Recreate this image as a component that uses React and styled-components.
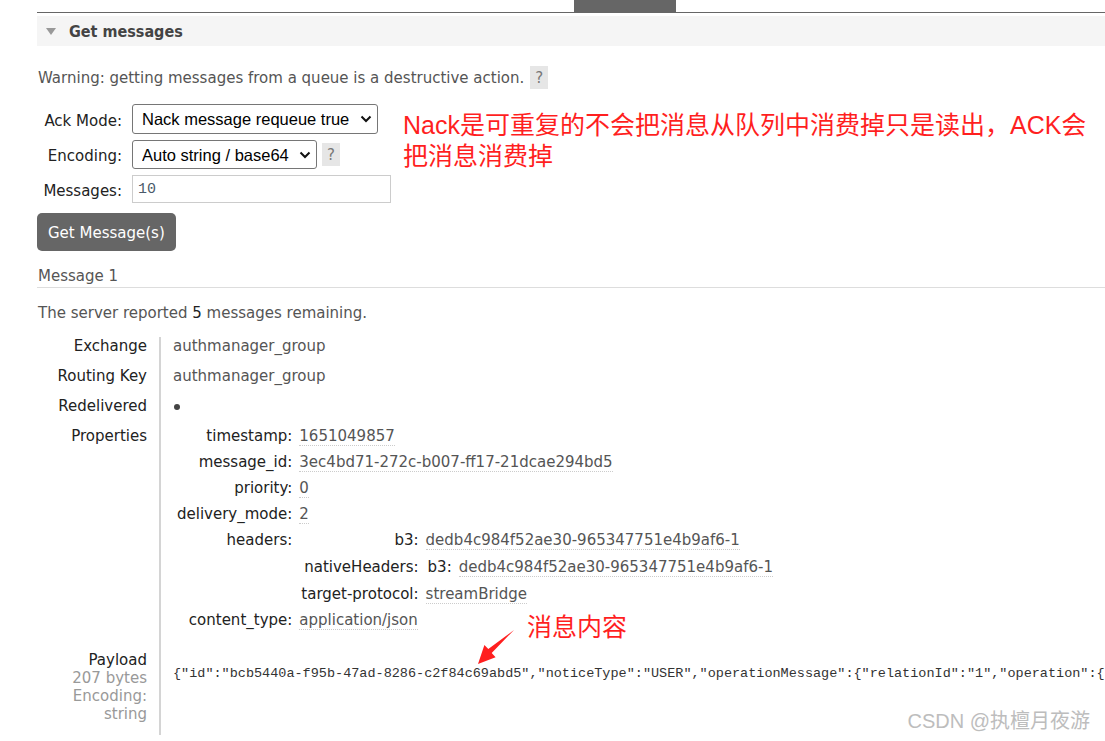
import React from 'react'
import styled, { createGlobalStyle } from 'styled-components'

const GlobalStyle = createGlobalStyle`
  html, body {
    margin: 0;
    padding: 0;
    background: #fff;
    overflow: hidden;
  }
  body {
    font-family: "DejaVu Sans", Verdana, sans-serif;
    font-size: 15px;
    color: #555;
  }
`

const PAYLOAD = '{"id":"bcb5440a-f95b-47ad-8286-c2f84c69abd5","noticeType":"USER","operationMessage":{"relationId":"1","operation":{"operationType":"ADD","content":"authmanager"}}}'

export default function App() {
    return (
        <Page>
            <GlobalStyle />
            <TabBar>
                <Tab />
                <Tab active />
            </TabBar>

            <SectionHeader>
                <Toggle />
                Get messages
            </SectionHeader>

            <Warning>
                Warning: getting messages from a queue is a destructive action.
                <Help>?</Help>
            </Warning>

            <FormArea>
                <Form>
                    <FieldLabel>Ack Mode:</FieldLabel>
                    <Control>
                        <Dropdown width={246} height={30} value="Nack message requeue true" />
                    </Control>

                    <FieldLabel>Encoding:</FieldLabel>
                    <Control>
                        <Dropdown width={185} height={29} value="Auto string / base64" />
                        <Help>?</Help>
                    </Control>

                    <FieldLabel>Messages:</FieldLabel>
                    <Control>
                        <CountInput defaultValue="10" />
                    </Control>
                </Form>
                <Note>
                    Nack是可重复的不会把消息从队列中消费掉只是读出，ACK会<br />
                    把消息消费掉
                </Note>
            </FormArea>

            <Button>Get Message(s)</Button>

            <MessageTitle>Message 1</MessageTitle>
            <Remaining>
                The server reported <Strong>5</Strong> messages remaining.
            </Remaining>

            <Facts>
                <FactLabel>Exchange</FactLabel>
                <FactValue>authmanager_group</FactValue>

                <FactLabel>Routing Key</FactLabel>
                <FactValue>authmanager_group</FactValue>

                <FactLabel>Redelivered</FactLabel>
                <FactValue><Bullet /></FactValue>

                <FactLabel>Properties</FactLabel>
                <FactValue bottom={22}>
                    <Props indent={4} gap={8}>
                        <PropKey>timestamp:</PropKey>
                        <PropValue><Dotted>1651049857</Dotted></PropValue>
                        <PropKey>message_id:</PropKey>
                        <PropValue><Dotted>3ec4bd71-272c-b007-ff17-21dcae294bd5</Dotted></PropValue>
                        <PropKey>priority:</PropKey>
                        <PropValue><Dotted>0</Dotted></PropValue>
                        <PropKey>delivery_mode:</PropKey>
                        <PropValue><Dotted>2</Dotted></PropValue>
                        <PropKey>headers:</PropKey>
                        <PropValue>
                            <Props indent={2} gap={9}>
                                <PropKey>b3:</PropKey>
                                <PropValue><Dotted>dedb4c984f52ae30-965347751e4b9af6-1</Dotted></PropValue>
                                <PropKey>nativeHeaders:</PropKey>
                                <PropValue>
                                    <Props indent={2} gap={8}>
                                        <PropKey>b3:</PropKey>
                                        <PropValue><Dotted>dedb4c984f52ae30-965347751e4b9af6-1</Dotted></PropValue>
                                    </Props>
                                </PropValue>
                                <PropKey>target-protocol:</PropKey>
                                <PropValue><Dotted>streamBridge</Dotted></PropValue>
                            </Props>
                        </PropValue>
                        <PropKey>content_type:</PropKey>
                        <PropValue><Dotted>application/json</Dotted></PropValue>
                    </Props>
                </FactValue>

                <FactLabel>
                    Payload
                    <SubLabel>207 bytes</SubLabel>
                    <SubLabel>Encoding:</SubLabel>
                    <SubLabel>string</SubLabel>
                </FactLabel>
                <FactValue>
                    <PayloadText>{PAYLOAD}</PayloadText>
                </FactValue>
            </Facts>

            <ContentNote>消息内容</ContentNote>
            <Arrow viewBox="0 0 40 36" width="40" height="36">
                <polygon points="38,1 15.7,23.9 19.6,28.2 2,35 8.4,15.9 12.3,20.1" fill="#ff1f1f" />
            </Arrow>

            <Watermark>CSDN @执檀月夜游</Watermark>
        </Page>
    )
}

const Dropdown = ({ width, height, value }) => {
    return (
        <SelectWrap width={width} height={height}>
            <Select defaultValue={value}>
                <option>{value}</option>
            </Select>
            <Chevron viewBox="0 0 12 8" width="12" height="8">
                <polyline points="1.5,1.5 6,6 10.5,1.5" fill="none" stroke="#111" strokeWidth="2" />
            </Chevron>
        </SelectWrap>
    )
}

const Page = styled.div`
    position: relative;
    height: 741px;
    overflow: hidden;
    padding-left: 37px;
    box-sizing: border-box;
`

const TabBar = styled.div`
    display: flex;
    height: 12px;
    padding-left: 435px;
    border-bottom: 1px solid #666;
`

const Tab = styled.div`
    width: 102px;
    height: 12px;
    background: ${({ active }) => active ? '#666' : 'transparent'};
`

const SectionHeader = styled.h2`
    display: flex;
    align-items: center;
    height: 30px;
    margin: 3px 0 0;
    background: #f5f5f5;
    font-family: "DejaVu Sans Condensed", "DejaVu Sans", sans-serif;
    font-size: 16px;
    font-weight: bold;
    color: #444;
`

const Toggle = styled.span`
    width: 0;
    height: 0;
    margin: 0 13px 0 9px;
    border-left: 5px solid transparent;
    border-right: 5px solid transparent;
    border-top: 7px solid #999;
`

const Warning = styled.p`
    display: flex;
    align-items: center;
    gap: 6px;
    margin: 20px 0 0 1px;
    line-height: 18px;
`

const Help = styled.span`
    display: inline-flex;
    align-items: center;
    justify-content: center;
    width: 18px;
    height: 23px;
    background: #e6e6e6;
    color: #777;
    font-size: 15px;
`

const FormArea = styled.div`
    display: flex;
    align-items: flex-start;
    margin: 15px 0 0 1px;
`

const Form = styled.div`
    display: grid;
    grid-template-columns: 84px 259px;
    column-gap: 10px;
    row-gap: 6px;
    align-items: center;
`

const FieldLabel = styled.label`
    padding-top: 3px;
    text-align: right;
    color: #222;
    line-height: 18px;
`

const Control = styled.div`
    display: flex;
    align-items: center;
    gap: 5px;
`

const SelectWrap = styled.div`
    position: relative;
    width: ${({ width }) => width}px;
    height: ${({ height }) => height}px;
`

const Select = styled.select`
    appearance: none;
    width: 100%;
    height: 100%;
    box-sizing: border-box;
    padding: 0 0 0 9px;
    border: 1px solid #767676;
    border-radius: 3px;
    background: #fff;
    font-family: "Liberation Sans", Arial, sans-serif;
    font-size: 16.5px;
    color: #000;
`

const Chevron = styled.svg`
    position: absolute;
    right: 6px;
    top: 50%;
    transform: translateY(-50%);
    pointer-events: none;
`

const CountInput = styled.input`
    width: 259px;
    height: 28px;
    box-sizing: border-box;
    padding: 0 5px;
    border: 1px solid #ccc;
    font-family: "Liberation Mono", monospace;
    font-size: 15px;
    color: #4b5a6b;
`

const Note = styled.div`
    margin: 6px 0 0 12px;
    color: #ff1f1f;
    font-family: "Liberation Sans", "Noto Sans CJK SC", sans-serif;
    font-size: 25px;
    line-height: 31px;
    white-space: nowrap;
`

const Button = styled.button`
    display: block;
    height: 38px;
    margin-top: 10px;
    padding: 1px 11px 0;
    border: none;
    border-radius: 5px;
    background: #666;
    color: #fff;
    font-family: "DejaVu Sans", sans-serif;
    font-size: 15px;
`

const MessageTitle = styled.h3`
    margin: 16px 0 0;
    padding: 0 0 2px 1px;
    border-bottom: 1px solid #ddd;
    font-size: 15px;
    font-weight: normal;
    line-height: 18px;
    color: #555;
`

const Remaining = styled.p`
    margin: 16px 0 0 1px;
    line-height: 18px;
`

const Strong = styled.span`
    color: #222;
`

const Facts = styled.div`
    display: grid;
    grid-template-columns: 122px 1fr;
    margin-top: 15px;
    line-height: 18px;
`

const FactLabel = styled.div`
    padding: 0 12px 12px 0;
    text-align: right;
    color: #222;
`

const SubLabel = styled.div`
    color: #999;
`

const FactValue = styled.div`
    min-width: 0;
    padding: 0 0 ${({ bottom }) => bottom || 12}px 12px;
    border-left: 2px solid #d4d4d4;
    color: #555;
`

const Bullet = styled.span`
    display: inline-block;
    width: 6px;
    height: 6px;
    margin: 0 0 1px 1px;
    border-radius: 50%;
    background: #444;
`

const Props = styled.div`
    display: grid;
    grid-template-columns: max-content max-content;
    column-gap: 7px;
    row-gap: ${({ gap }) => gap}px;
    margin-left: ${({ indent }) => indent}px;
`

const PropKey = styled.div`
    text-align: right;
    color: #222;
`

const PropValue = styled.div`
    color: #555;
`

const Dotted = styled.span`
    border-bottom: 1px dotted #ccc;
`

const PayloadText = styled.div`
    padding-top: 14px;
    font-family: "Liberation Mono", monospace;
    font-size: 13.5px;
    line-height: 18px;
    color: #333;
    white-space: pre;
`

const ContentNote = styled.div`
    position: absolute;
    left: 527px;
    top: 610px;
    color: #ff1f1f;
    font-family: "Noto Sans CJK SC", sans-serif;
    font-size: 25px;
    line-height: 31px;
`

const Arrow = styled.svg`
    position: absolute;
    left: 476px;
    top: 629px;
`

const Watermark = styled.div`
    position: absolute;
    right: 15px;
    top: 709px;
    color: #bdbdbd;
    font-family: "Liberation Sans", "Noto Sans CJK SC", sans-serif;
    font-size: 20px;
    line-height: 24px;
`
